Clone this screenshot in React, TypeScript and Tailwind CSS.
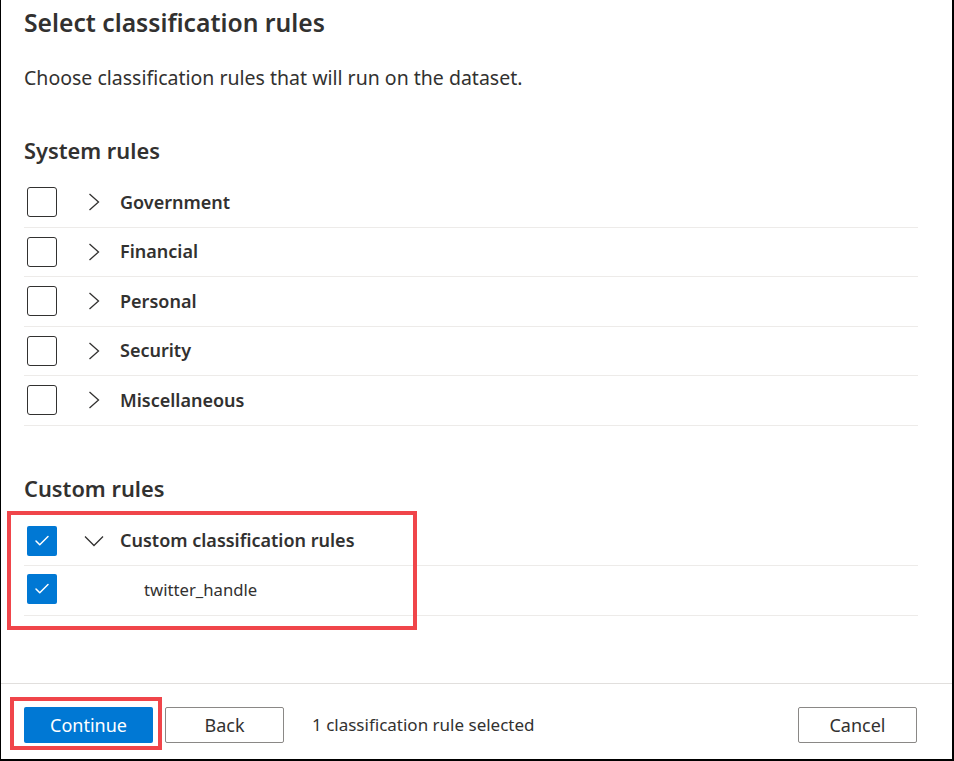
import { Check } from "lucide-react"

const systemRules = ["Government", "Financial", "Personal", "Security", "Miscellaneous"]

const Box = ({ checked }: { checked?: boolean }) =>
  checked ? (
    <span className="flex h-[30px] w-[30px] items-center justify-center rounded-[2px] bg-[#0078d4]">
      <Check size={18} strokeWidth={2} className="text-white" />
    </span>
  ) : (
    <span className="block h-[30px] w-[30px] rounded-[3px] border border-[#323130]" />
  )

const Chevron = ({ open }: { open?: boolean }) =>
  open ? (
    <svg width="20" height="12" viewBox="0 0 20 12" fill="none" stroke="#323130" strokeWidth="1.3">
      <polyline points="1,1.5 10,10.5 19,1.5" />
    </svg>
  ) : (
    <svg width="12" height="18" viewBox="0 0 12 18" fill="none" stroke="#323130" strokeWidth="1.3">
      <polyline points="1.5,1 10.5,9 1.5,17" />
    </svg>
  )

const RuleRow = ({ label, open, checked }: { label: string; open?: boolean; checked?: boolean }) => (
  <div className="flex h-[49.5px] items-center border-b border-[#edebe9]">
    <span className="ml-[3px]">
      <Box checked={checked} />
    </span>
    <span className={`flex w-[63px] ${open ? "pl-[27px]" : "pl-[31px]"}`}>
      <Chevron open={open} />
    </span>
    <span className="text-[18px] font-semibold text-[#323130]">{label}</span>
  </div>
)

const App = () => {
  return (
    <div
      className="flex h-[761px] w-[954px] flex-col border-b-2 border-l border-r-2 border-black bg-white text-[#323130]"
      style={{ fontFamily: "'Noto Sans', 'Open Sans', sans-serif" }}
    >
      <div className="flex-1 pl-[23px] pr-[34px]">
        <h1 className="flex h-[46px] items-center text-[24.7px] font-semibold">
          Select classification rules
        </h1>
        <p className="mt-[14px] flex h-9 items-center text-[19.5px]">
          Choose classification rules that will run on the dataset.
        </p>

        <h2 className="mt-[37px] flex h-9 items-center text-[21.8px] font-semibold">System rules</h2>
        <div className="mt-[9px]">
          {systemRules.map((r) => (
            <RuleRow key={r} label={r} />
          ))}
        </div>

        <h2 className="mt-[46px] flex h-9 items-center text-[21.8px] font-semibold">Custom rules</h2>
        <div className="relative mt-[9px]">
          <div className="absolute -left-[17px] -top-[6px] h-[119px] w-[410px] border-4 border-[#f0454a]" />
          <RuleRow label="Custom classification rules" open checked />
          <div className="flex h-[49.5px] items-center border-b border-[#edebe9] pb-[2px]">
            <span className="ml-[3px]">
              <Box checked />
            </span>
            <span className="ml-[87px] text-[16.7px] text-[#323130]">twitter_handle</span>
          </div>
        </div>
      </div>

      <div className="flex h-[76px] items-start border-t border-[#e1dfdd] pl-[23px] pr-[35px] pt-[23px]">
        <div className="relative">
          <div className="absolute -left-[14px] -top-[10px] h-[53px] w-[152px] border-4 border-[#f0454a]" />
          <button className="relative h-9 w-[129px] rounded-[2px] bg-[#0078d4] text-[18px] text-white">
            Continue
          </button>
        </div>
        <button className="ml-3 h-9 w-[119px] rounded-[2px] border border-[#8a8886] text-[18px] text-[#323130]">
          Back
        </button>
        <span className="ml-[28px] flex h-9 items-center text-[17px]">1 classification rule selected</span>
        <button className="ml-auto h-9 w-[119px] rounded-[2px] border border-[#8a8886] text-[18px] text-[#323130]">
          Cancel
        </button>
      </div>
    </div>
  )
}

export default App
